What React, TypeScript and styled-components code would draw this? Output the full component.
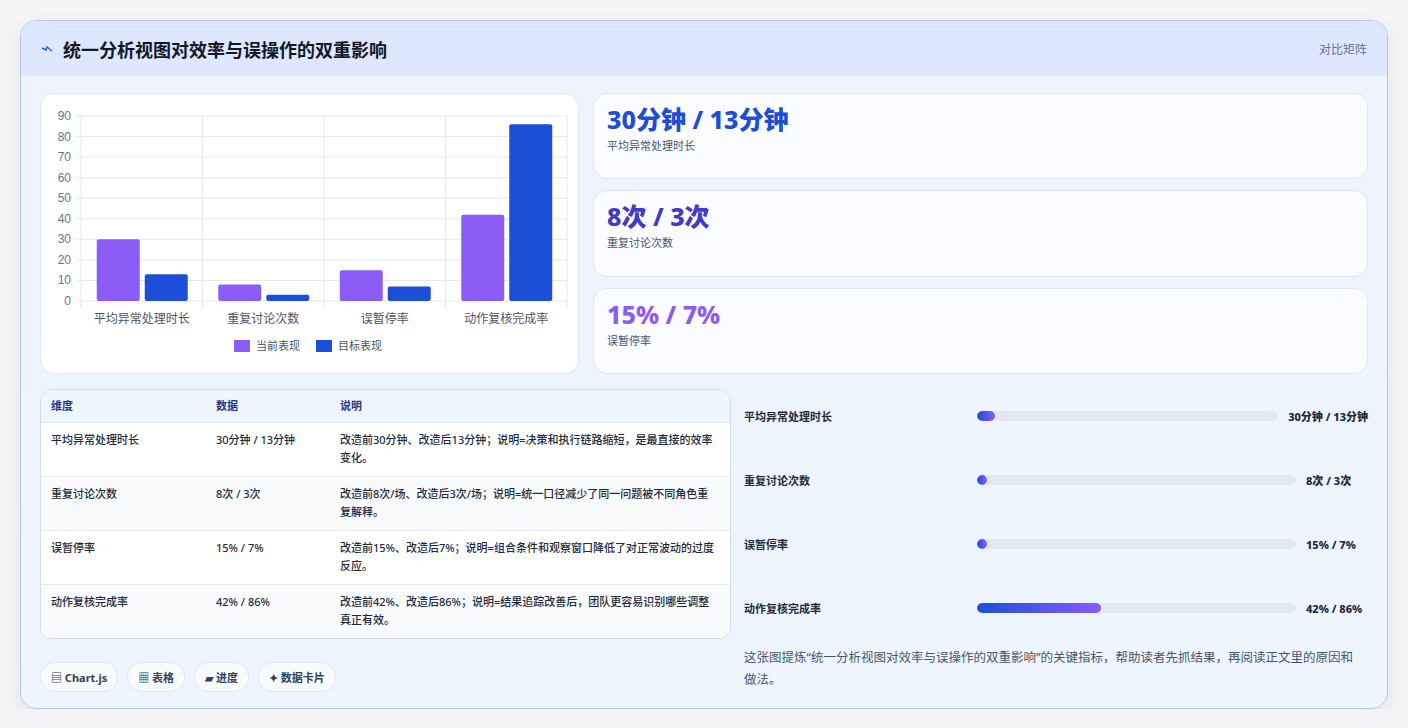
import styled, { createGlobalStyle } from 'styled-components';

const Global = createGlobalStyle`
  body { margin: 0; background: #f3f4f6; font-family: "Noto Sans", "Noto Sans CJK SC", sans-serif; color: #1e293b; }
`;

const Page = styled.div`
  padding: 20px 20px 0 20px;
  box-sizing: border-box;
  width: 1408px;
`;

const Panel = styled.section`
  border: 1px solid #b9c6f3;
  border-radius: 16px;
  overflow: hidden;
  background: linear-gradient(180deg, #eef3fe, #eef5fe);
  box-shadow: 0 6px 16px rgba(30, 41, 59, 0.08);
`;

const Header = styled.div`
  height: 55px;
  display: flex;
  align-items: center;
  justify-content: space-between;
  padding: 0 20px;
  background: #dde7fe;
`;

const Title = styled.h1`
  margin: 0;
  font-size: 18px;
  font-weight: 700;
  color: #111827;
  display: flex;
  align-items: center;
  gap: 10px;
`;

const Tag = styled.span`
  font-size: 12px;
  color: #64748b;
`;

const Body = styled.div`
  padding: 17px 19px 16px 19px;
  display: grid;
  grid-template-columns: 539px 1fr;
  column-gap: 14px;
  row-gap: 15px;
`;

const ChartCard = styled.div`
  background: #fff;
  border: 1px solid #e2e8f0;
  border-radius: 14px;
  height: 281px;
  box-sizing: border-box;
`;

const Stats = styled.div`
  display: grid;
  grid-template-rows: repeat(3, 1fr);
  gap: 11px;
`;

const StatCard = styled.div`
  background: #fbfcff;
  border: 1px solid #dfe6f3;
  border-radius: 14px;
  padding: 9px 13px;
`;

const StatValue = styled.div<{ $c: string }>`
  font-size: 25px;
  font-weight: 800;
  color: ${({ $c }) => $c};
  line-height: 32px;
`;

const StatLabel = styled.div`
  font-size: 11px;
  color: #475569;
  margin-top: 2px;
`;

const Lower = styled.div`
  grid-column: 1 / -1;
  display: grid;
  grid-template-columns: 691px 1fr;
  gap: 13px;
`;

const Table = styled.div`
  border: 1px solid #d3dbe8;
  border-radius: 12px;
  overflow: hidden;
  background: #fff;
`;

const Row = styled.div<{ $head?: boolean; $alt?: boolean }>`
  display: grid;
  grid-template-columns: 165px 124px 1fr;
  padding: ${({ $head }) => ($head ? '7px 10px' : '8px 10px 9px')};
  font-size: 11px;
  line-height: 18px;
  font-weight: ${({ $head }) => ($head ? 700 : 500)};
  color: ${({ $head }) => ($head ? '#1e3a8a' : '#1e293b')};
  background: ${({ $head, $alt }) => ($head ? '#eff5ff' : $alt ? '#f8fafc' : '#fff')};
  border-top: ${({ $head }) => ($head ? 'none' : '1px solid #e5e9f0')};
  & > span:last-child { padding-right: 6px; }
`;

const Bars = styled.div`
  display: flex;
  flex-direction: column;
  margin-top: -5px;
`;

const BarRow = styled.div`
  display: flex;
  align-items: center;
  height: 64px;
  font-size: 11px;
  font-weight: 600;
`;

const BarLabel = styled.span`
  width: 233px;
  flex-shrink: 0;
`;

const Track = styled.div`
  flex: 1;
  height: 10px;
  border-radius: 5px;
  background: #e2e8f0;
  overflow: hidden;
  margin-right: 10px;
`;

const Fill = styled.div`
  height: 100%;
  border-radius: 5px;
  background: linear-gradient(90deg, #1d4ed8, #8b5cf6);
`;

const BarValue = styled.span`
  font-weight: 800;
  min-width: 62px;
`;

const Note = styled.p`
  margin: 7px 0 0;
  font-size: 12.5px;
  line-height: 22px;
  color: #475569;
  padding-right: 4px;
`;

const Chips = styled.div`
  display: flex;
  gap: 9px;
  margin-top: 23px;
`;

const Chip = styled.span`
  display: inline-flex;
  align-items: center;
  gap: 4px;
  height: 28px;
  padding: 0 10px;
  border: 1px solid #e2e8f0;
  border-radius: 14px;
  background: #f8fafc;
  font-size: 11px;
  font-weight: 700;
  color: #334155;
`;

const cats = ['平均异常处理时长', '重复讨论次数', '误暂停率', '动作复核完成率'];
const cur = [30, 8, 15, 42];
const tgt = [13, 3, 7, 86];

function Chart() {
  const x0 = 40, x1 = 526, yT = 22, yB = 207;
  const sy = (v: number) => yB - ((yB - yT) * v) / 90;
  const w = (x1 - x0) / 4;
  return (
    <svg width="537" height="279" style={{ display: 'block' }}>
      {[0, 10, 20, 30, 40, 50, 60, 70, 80, 90].map((v) => (
        <g key={v}>
          <line x1={x0 - 4} x2={x1} y1={sy(v)} y2={sy(v)} stroke="#e5e7eb" />
          <text x={x0 - 10} y={sy(v) + 4} fontSize="12" fill="#6b7280" textAnchor="end" fontFamily="Liberation Sans, sans-serif">{v}</text>
        </g>
      ))}
      {[0, 1, 2, 3, 4].map((i) => (
        <line key={i} x1={x0 + i * w} x2={x0 + i * w} y1={yT} y2={yB + 7} stroke="#e5e7eb" />
      ))}
      {cats.map((c, i) => {
        const cx = x0 + i * w + w / 2;
        return (
          <g key={c}>
            <rect x={cx - 45} y={sy(cur[i])} width="43" height={yB - sy(cur[i])} rx="2" fill="#8b5cf6" />
            <rect x={cx + 3} y={sy(tgt[i])} width="43" height={yB - sy(tgt[i])} rx="2" fill="#1d4ed8" />
            <text x={cx} y={229} fontSize="12" fill="#4b5563" textAnchor="middle">{c}</text>
          </g>
        );
      })}
      <rect x="193" y="246" width="16" height="12" fill="#8b5cf6" />
      <text x="215" y="256" fontSize="11" fill="#4b5563">当前表现</text>
      <rect x="275" y="246" width="16" height="12" fill="#1d4ed8" />
      <text x="297" y="256" fontSize="11" fill="#4b5563">目标表现</text>
    </svg>
  );
}

const rows = [
  ['平均异常处理时长', '30分钟 / 13分钟', '改造前30分钟、改造后13分钟；说明=决策和执行链路缩短，是最直接的效率变化。'],
  ['重复讨论次数', '8次 / 3次', '改造前8次/场、改造后3次/场；说明=统一口径减少了同一问题被不同角色重复解释。'],
  ['误暂停率', '15% / 7%', '改造前15%、改造后7%；说明=组合条件和观察窗口降低了对正常波动的过度反应。'],
  ['动作复核完成率', '42% / 86%', '改造前42%、改造后86%；说明=结果追踪改善后，团队更容易识别哪些调整真正有效。'],
];

const bars: [string, number, string][] = [
  ['平均异常处理时长', 6, '30分钟 / 13分钟'],
  ['重复讨论次数', 3, '8次 / 3次'],
  ['误暂停率', 3, '15% / 7%'],
  ['动作复核完成率', 39, '42% / 86%'],
];

export default function App() {
  return (
    <Page>
      <Global />
      <Panel>
        <Header>
          <Title>
            <svg width="12" height="12" viewBox="0 0 12 12"><path d="M1 5 L5 7 L6 4 L11 8" stroke="#2563eb" strokeWidth="1.5" fill="none" /></svg>
            统一分析视图对效率与误操作的双重影响
          </Title>
          <Tag>对比矩阵</Tag>
        </Header>
        <Body>
          <ChartCard><Chart /></ChartCard>
          <Stats>
            <StatCard><StatValue $c="#1d4ed8">30分钟 / 13分钟</StatValue><StatLabel>平均异常处理时长</StatLabel></StatCard>
            <StatCard><StatValue $c="#4338ca">8次 / 3次</StatValue><StatLabel>重复讨论次数</StatLabel></StatCard>
            <StatCard><StatValue $c="#8b5cf6">15% / 7%</StatValue><StatLabel>误暂停率</StatLabel></StatCard>
          </Stats>
          <Lower>
            <div>
              <Table>
                <Row $head><span>维度</span><span>数据</span><span>说明</span></Row>
                {rows.map((r, i) => (
                  <Row key={r[0]} $alt={i % 2 === 1}><span>{r[0]}</span><span>{r[1]}</span><span>{r[2]}</span></Row>
                ))}
              </Table>
              <Chips>
                <Chip>▤ Chart.js</Chip>
                <Chip>▦ 表格</Chip>
                <Chip>▰ 进度</Chip>
                <Chip>✦ 数据卡片</Chip>
              </Chips>
            </div>
            <div>
              <Bars>
                {bars.map(([l, p, v]) => (
                  <BarRow key={l}>
                    <BarLabel>{l}</BarLabel>
                    <Track><Fill style={{ width: `${p}%` }} /></Track>
                    <BarValue>{v}</BarValue>
                  </BarRow>
                ))}
              </Bars>
              <Note>这张图提炼“统一分析视图对效率与误操作的双重影响”的关键指标，帮助读者先抓结果，再阅读正文里的原因和做法。</Note>
            </div>
          </Lower>
        </Body>
      </Panel>
    </Page>
  );
}
